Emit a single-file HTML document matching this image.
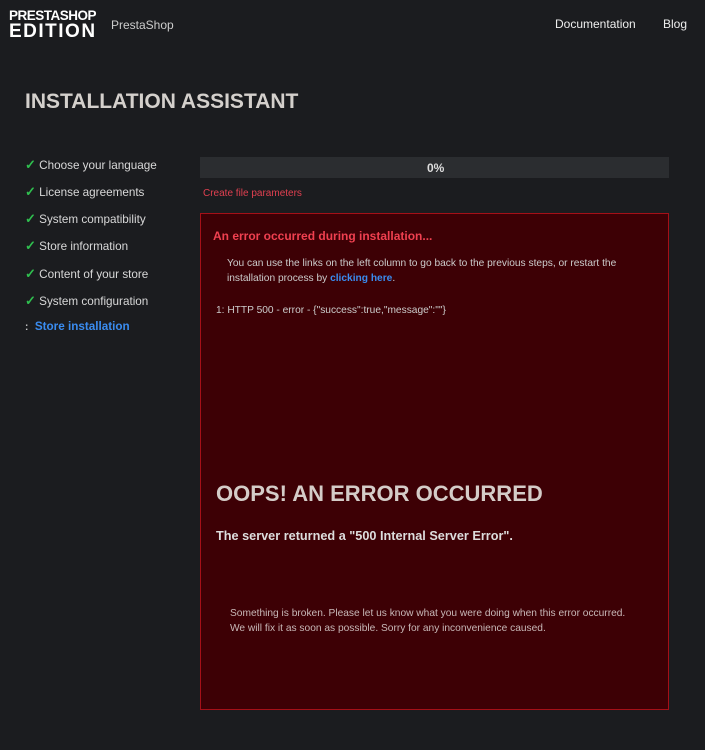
<!DOCTYPE html><html><head><style>
body{margin:0;width:705px;height:750px;background:#1b1c1f;font-family:"Liberation Sans",sans-serif;position:relative;overflow:hidden;color:#ddd}
.a{position:absolute;white-space:nowrap}
.logo{font-weight:900;color:#fff;line-height:15px}
.st{font-size:11.7px;color:#d8d8d8}
.ck{color:#2fbf4f;font-weight:bold;font-size:13px}
</style></head><body>
<div class="a logo" style="left:9px;top:8px;font-size:13.5px;letter-spacing:-0.5px">PRESTASHOP</div>
<div class="a logo" style="left:9px;top:22px;font-size:19px;line-height:19px;letter-spacing:1.5px">EDITION</div>
<div class="a" style="left:111px;top:18px;font-size:12px;color:#ccc">PrestaShop</div>
<div class="a" style="left:555px;top:17px;font-size:12px;color:#eee">Documentation</div>
<div class="a" style="left:663px;top:17px;font-size:12px;color:#eee">Blog</div>
<div class="a" style="left:25px;top:90px;font-size:21px;font-weight:900;color:#d4d0cc">INSTALLATION ASSISTANT</div>
<div class="a st" style="left:25px;top:157px"><span class="ck">✓</span> Choose your language</div>
<div class="a st" style="left:25px;top:184px"><span class="ck">✓</span> License agreements</div>
<div class="a st" style="left:25px;top:211px"><span class="ck">✓</span> System compatibility</div>
<div class="a st" style="left:25px;top:238px"><span class="ck">✓</span> Store information</div>
<div class="a st" style="left:25px;top:266px"><span class="ck">✓</span> Content of your store</div>
<div class="a st" style="left:25px;top:293px"><span class="ck">✓</span> System configuration</div>
<div class="a st" style="left:25px;top:320px;color:#3a8cf0;font-weight:bold"><span style="color:#ccc;font-size:10px">:</span>&nbsp; Store installation</div>
<div class="a" style="left:200px;top:157px;width:469px;height:21px;background:#2b2d30"></div>
<div class="a" style="left:427px;top:161px;font-size:12px;font-weight:bold;color:#ddd">0%</div>
<div class="a" style="left:203px;top:188px;font-size:10px;color:#e04050">Create file parameters</div>
<div class="a" style="left:200px;top:213px;width:467px;height:495px;background:#3d0005;border:1px solid #a51018"></div>
<div class="a" style="left:213px;top:229px;font-size:12px;font-weight:bold;color:#f04050">An error occurred during installation...</div>
<div class="a" style="left:227px;top:256px;font-size:10.2px;line-height:15px;color:#ccc">You can use the links on the left column to go back to the previous steps, or restart the<br>installation process by <b style="color:#3a8cf0">clicking here</b>.</div>
<div class="a" style="left:216px;top:305px;font-size:10.2px;color:#ccc">1: HTTP 500 - error - {"success":true,"message":""}</div>
<div class="a" style="left:216px;top:481px;font-size:22px;font-weight:900;color:#d4ccc8">OOPS! AN ERROR OCCURRED</div>
<div class="a" style="left:216px;top:529px;font-size:12.7px;font-weight:bold;color:#ddd">The server returned a "500 Internal Server Error".</div>
<div class="a" style="left:230px;top:606px;font-size:10.2px;line-height:15px;color:#c8b8b8">Something is broken. Please let us know what you were doing when this error occurred.<br>We will fix it as soon as possible. Sorry for any inconvenience caused.</div>
</body></html>
